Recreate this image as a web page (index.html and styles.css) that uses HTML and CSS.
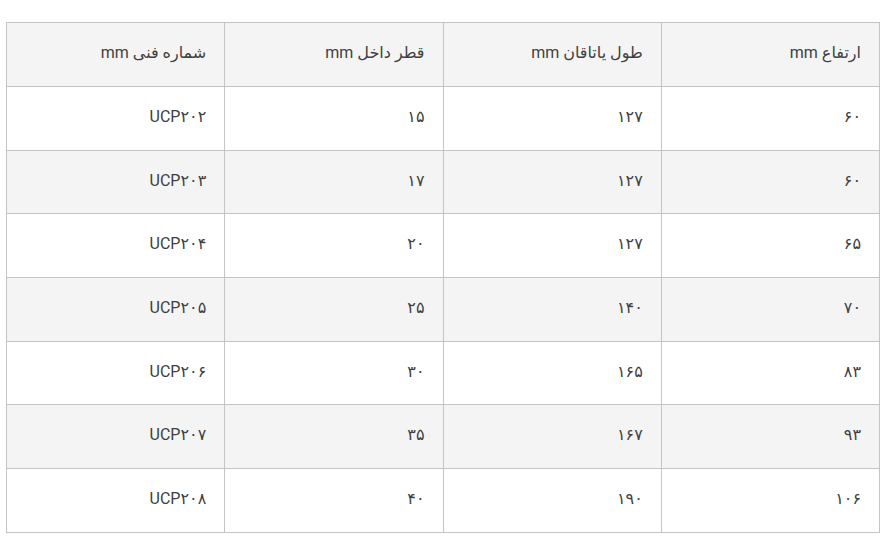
FILE: index.html
```html
<!DOCTYPE html>
<html lang="fa" dir="rtl">
<head>
<meta charset="utf-8">
<link rel="stylesheet" href="styles.css">
</head>
<body>
<div class="wrap">
<table class="spec">
<thead>
<tr><th>ارتفاع mm</th><th>طول یاتاقان mm</th><th>قطر داخل mm</th><th>شماره فنی mm</th></tr>
</thead>
<tbody>
<tr><td>۶۰</td><td>۱۲۷</td><td>۱۵</td><td>UCP۲۰۲</td></tr>
<tr><td>۶۰</td><td>۱۲۷</td><td>۱۷</td><td>UCP۲۰۳</td></tr>
<tr><td>۶۵</td><td>۱۲۷</td><td>۲۰</td><td>UCP۲۰۴</td></tr>
<tr><td>۷۰</td><td>۱۴۰</td><td>۲۵</td><td>UCP۲۰۵</td></tr>
<tr><td>۸۳</td><td>۱۶۵</td><td>۳۰</td><td>UCP۲۰۶</td></tr>
<tr><td>۹۳</td><td>۱۶۷</td><td>۳۵</td><td>UCP۲۰۷</td></tr>
<tr><td>۱۰۶</td><td>۱۹۰</td><td>۴۰</td><td>UCP۲۰۸</td></tr>
</tbody>
</table>
</div>
</body>
</html>
```
FILE: styles.css
```css
html, body { margin: 0; padding: 0; background: #fff; }
body {
  font-family: Roboto, "DejaVu Sans", sans-serif;
  font-size: 16px;
  color: #404040;
}
.wrap {
  padding: 22px 12px 0 6px;
}
.spec {
  width: 874px;
  border-collapse: collapse;
  table-layout: fixed;
}
.spec th, .spec td {
  border: 1px solid #c4c4c4;
  text-align: right;
  padding: 0 18px 4px;
  font-weight: normal;
  vertical-align: middle;
  box-sizing: border-box;
}
.spec th {
  height: 64px;
  background: #f4f4f4;
}
.spec td { height: 63.7px; }
.spec tbody tr:nth-child(even) td { background: #f4f4f4; }
```
